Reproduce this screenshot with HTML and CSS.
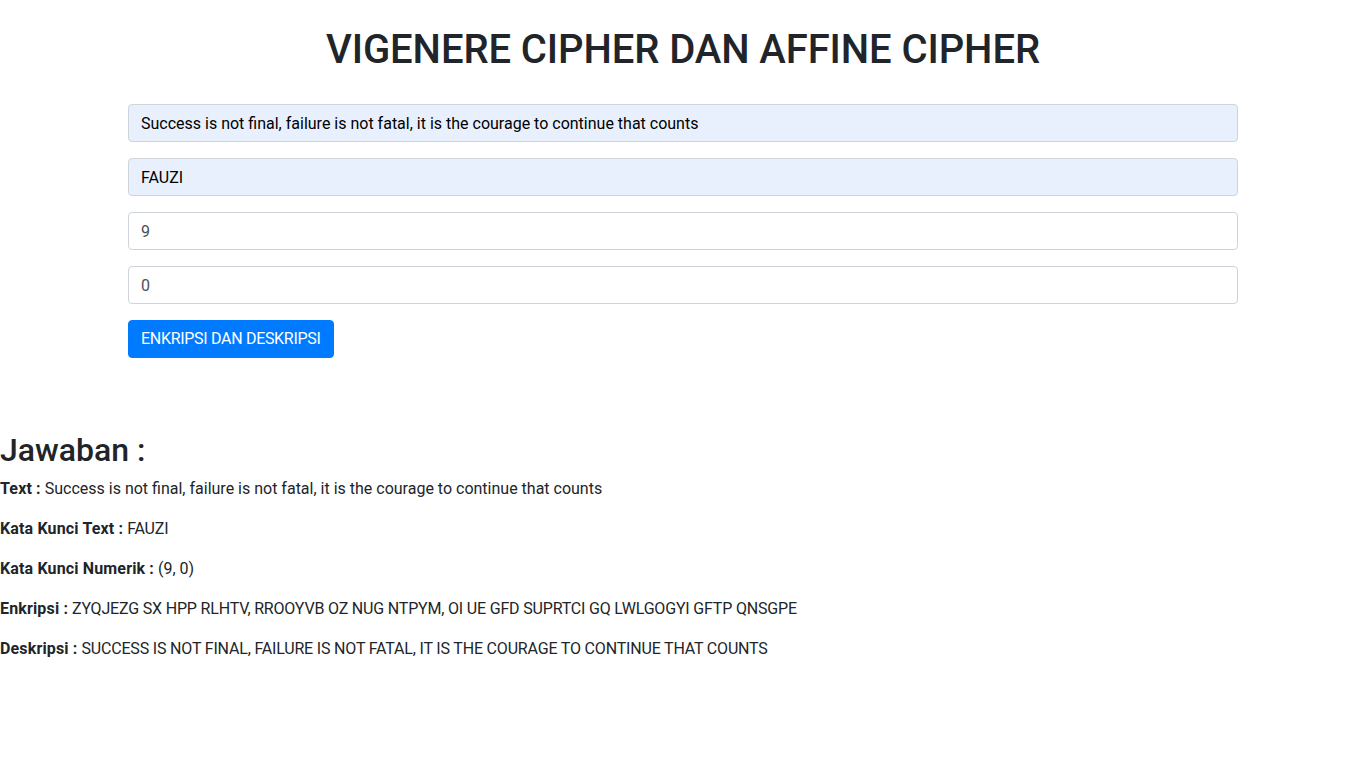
FILE: index.html
```html
<!DOCTYPE html>
<html lang="id">
<head>
<meta charset="utf-8">
<title>Vigenere Cipher dan Affine Cipher</title>
<link rel="stylesheet" href="styles.css">
</head>
<body>
<div class="container">
  <h1 class="title">VIGENERE CIPHER DAN AFFINE CIPHER</h1>
  <form class="form">
    <input class="field autofill" type="text" value="Success is not final, failure is not fatal, it is the courage to continue that counts">
    <input class="field autofill" type="text" value="FAUZI">
    <input class="field" type="text" value="9">
    <input class="field" type="text" value="0">
    <button class="btn" type="button">ENKRIPSI DAN DESKRIPSI</button>
  </form>
</div>
<section class="result">
  <h2 class="result-title">Jawaban :</h2>
  <p class="line"><b>Text :</b> Success is not final, failure is not fatal, it is the courage to continue that counts</p>
  <p class="line"><b>Kata Kunci Text :</b> <span class="caps">FAUZI</span></p>
  <p class="line"><b>Kata Kunci Numerik :</b> (9, 0)</p>
  <p class="line"><b>Enkripsi :</b> <span class="caps">ZYQJEZG SX HPP RLHTV, RROOYVB OZ NUG NTPYM, OI UE GFD SUPRTCI GQ LWLGOGYI GFTP QNSGPE</span></p>
  <p class="line"><b>Deskripsi :</b> <span class="caps">SUCCESS IS NOT FINAL, FAILURE IS NOT FATAL, IT IS THE COURAGE TO CONTINUE THAT COUNTS</span></p>
</section>
</body>
</html>
```
FILE: styles.css
```css
* { box-sizing: border-box; }
body {
  margin: 0;
  font-family: Roboto, "Open Sans", sans-serif;
  font-size: 16px;
  line-height: 1.5;
  color: #212529;
  background: #fff;
}
.container {
  max-width: 1140px;
  margin: 0 auto;
  padding: 0 15px;
}
.title {
  margin: 26px 0 30px;
  text-align: center;
  font-size: 40px;
  font-weight: 500;
  line-height: 1.2;
  letter-spacing: -0.1px;
}
.form {
  display: flex;
  flex-direction: column;
  align-items: flex-start;
  gap: 16px;
}
.field {
  display: block;
  width: 100%;
  height: 38px;
  padding: 6px 12px;
  font-family: inherit;
  font-size: 16px;
  line-height: 1.5;
  color: #495057;
  background: #fff;
  border: 1px solid #ced4da;
  border-radius: 4px;
}
.field.autofill {
  background: #e8f0fe;
  color: #000;
}
.btn {
  height: 38px;
  padding: 6px 12px;
  font-family: inherit;
  font-size: 16px;
  line-height: 1.5;
  letter-spacing: -0.3px;
  color: #fff;
  background: #007bff;
  border: 1px solid #007bff;
  border-radius: 4px;
}
.result {
  margin-top: 73px;
}
.result-title {
  margin: 0 0 8px;
  font-size: 32px;
  font-weight: 500;
  line-height: 1.2;
}
.line {
  margin: 0 0 16px;
}
.line b {
  font-weight: 700;
  letter-spacing: 0.15px;
}
.caps {
  letter-spacing: -0.18px;
}
```
